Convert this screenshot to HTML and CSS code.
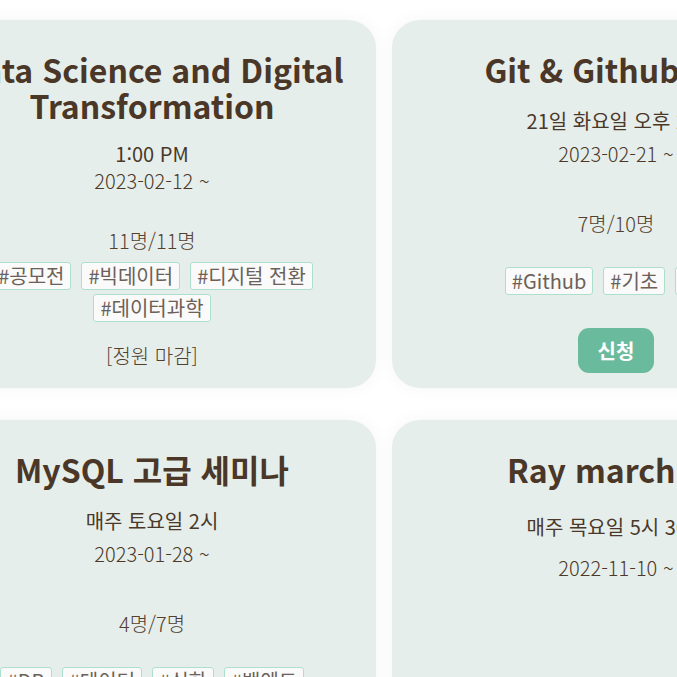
FILE: index.html
```html
<!DOCTYPE html>
<html lang="ko">
<head>
<meta charset="utf-8">
<title>스터디 목록</title>
<link rel="stylesheet" href="styles.css">
</head>
<body>
<main class="grid">
  <article class="card card--dense">
    <h2 class="card-title">Data Science and Digital Transformation</h2>
    <p class="card-time">1:00 PM</p>
    <p class="card-date">2023-02-12 ~</p>
    <p class="card-count">11명/11명</p>
    <ul class="tags">
      <li class="tag">#공모전</li>
      <li class="tag">#빅데이터</li>
      <li class="tag">#디지털 전환</li>
      <li class="tag">#데이터과학</li>
    </ul>
    <div class="card-action"><p class="status">[정원 마감]</p></div>
  </article>

  <article class="card">
    <h2 class="card-title">Git &amp; Github 기초</h2>
    <p class="card-time">21일 화요일 오후 2시</p>
    <p class="card-date">2023-02-21 ~</p>
    <p class="card-count">7명/10명</p>
    <ul class="tags">
      <li class="tag">#Github</li>
      <li class="tag">#기초</li>
      <li class="tag">#Git</li>
    </ul>
    <div class="card-action"><button class="btn" type="button">신청</button></div>
  </article>

  <article class="card">
    <h2 class="card-title">MySQL 고급 세미나</h2>
    <p class="card-time">매주 토요일 2시</p>
    <p class="card-date">2023-01-28 ~</p>
    <p class="card-count">4명/7명</p>
    <ul class="tags">
      <li class="tag">#DB</li>
      <li class="tag">#데이터</li>
      <li class="tag">#심화</li>
      <li class="tag">#백엔드</li>
    </ul>
    <div class="card-action"><button class="btn" type="button">신청</button></div>
  </article>

  <article class="card card--sparse">
    <h2 class="card-title">Ray marching</h2>
    <p class="card-time">매주 목요일 5시 30분</p>
    <p class="card-date">2022-11-10 ~</p>
    <div class="card-action"><button class="btn" type="button">신청</button></div>
  </article>
</main>
</body>
</html>
```

FILE: styles.css
```css
html, body {
  margin: 0;
  padding: 0;
  overflow: hidden;
  background: #ffffff;
}

body {
  font-family: "Noto Sans CJK KR", "Noto Sans", sans-serif;
  color: #4a3828;
}

.grid {
  display: grid;
  grid-template-columns: repeat(2, 448px);
  column-gap: 16px;
  row-gap: 32px;
  margin: 20px 0 0 -72px;
}

.card {
  --u: 5.44px;
  height: 368px;
  box-sizing: border-box;
  padding: 30.6px 24px 14.7px;
  background: #e6eeeb;
  border-radius: 28px;
  box-shadow: 0 0 18px rgba(0, 0, 0, 0.045);
  display: flex;
  flex-direction: column;
  align-items: center;
  text-align: center;
}

.card--dense {
  --u: 0px;
}

.card--sparse {
  --u: 14.5px;
}

.card-title {
  margin: 0;
  font-size: 32px;
  line-height: 36.3px;
  font-weight: 700;
  color: #4a3727;
}

.card-time,
.card-date,
.card-count,
.status {
  margin: 0;
  font-size: 20px;
  line-height: 27px;
}

.card-time {
  margin-top: calc(17px + 0.6 * var(--u));
  font-weight: 400;
}

.card-date {
  margin-top: var(--u);
  font-weight: 300;
}

.card-count {
  margin-top: calc(32.7px + 2 * var(--u));
  font-weight: 300;
  color: #52402f;
}

.tags {
  list-style: none;
  margin: calc(8.5px + 4 * var(--u)) 0 0;
  padding: 0;
  display: flex;
  flex-wrap: wrap;
  justify-content: center;
  gap: 4px 10px;
}

.tag {
  font-size: 20px;
  line-height: 24px;
  padding: 1px 6px;
  border: 1px solid #ace0cd;
  border-radius: 3px;
  background: #f9faf9;
  color: #6c6058;
}

.card-action {
  margin-top: auto;
  display: flex;
  justify-content: center;
}

.status {
  margin: 4px 0;
  font-weight: 300;
  color: #52402f;
}

.btn {
  font-family: inherit;
  font-size: 20px;
  line-height: 27px;
  font-weight: 700;
  color: #ffffff;
  background: #6abb9d;
  border: none;
  border-radius: 11px;
  padding: 9px 20px;
}
```
